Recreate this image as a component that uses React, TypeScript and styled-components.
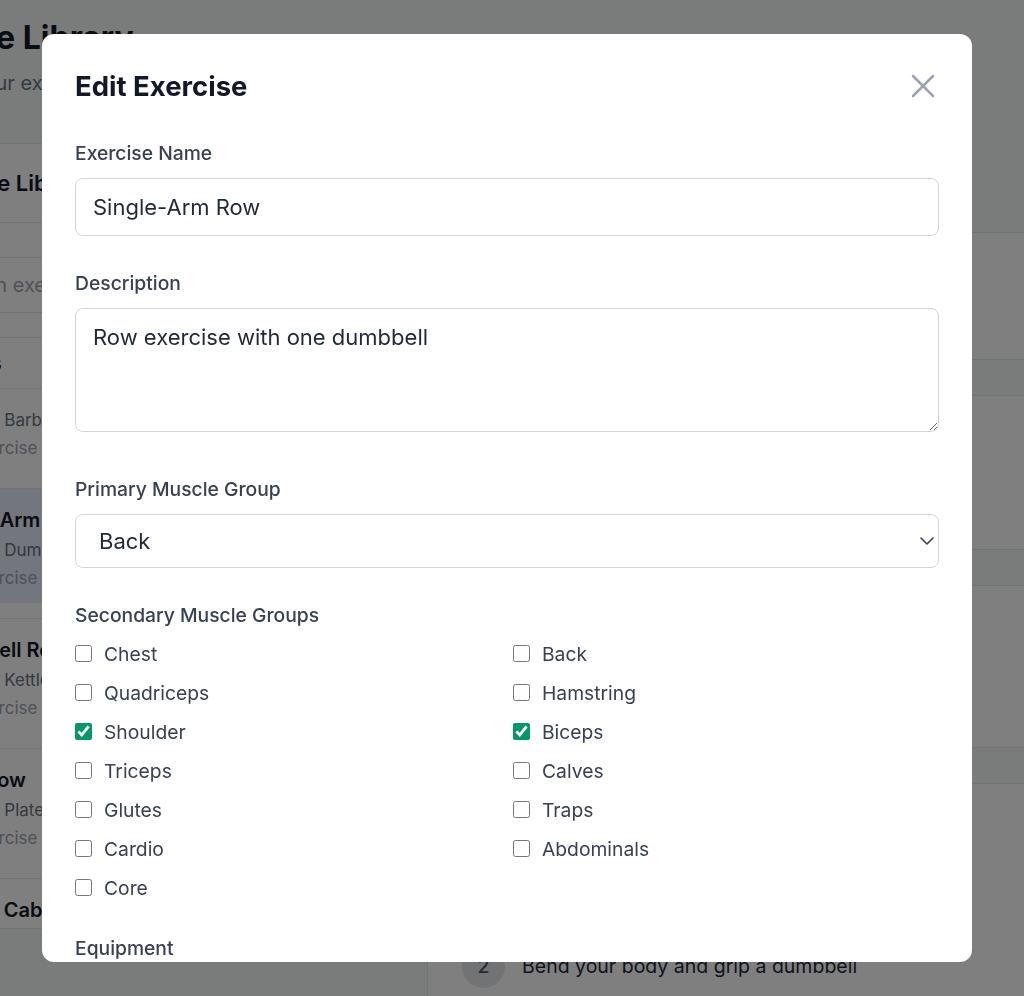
import React from 'react';
import styled, { createGlobalStyle } from 'styled-components';
import { ChevronDown } from 'lucide-react';

const GlobalStyle = createGlobalStyle`
  * { box-sizing: border-box; }
  html, body { margin: 0; padding: 0; }
  body {
    font-family: Inter, "Noto Sans", sans-serif;
    background: #f5f6f7;
    color: #111827;
    overflow: hidden;
  }
`;

/* ---------- background page ---------- */

const Viewport = styled.div`
  width: 100vw;
  height: 100vh;
  overflow: hidden;
  display: flex;
  justify-content: center;
`;

const Page = styled.div`
  flex: 0 0 1260px;
  width: 1260px;
  padding-top: 15px;
`;

const PageTitle = styled.h1`
  margin: 0;
  font-size: 32px;
  line-height: 46px;
  font-weight: 700;
  color: #111827;
`;

const PageSubtitle = styled.p`
  margin: 8px 0 0;
  font-size: 20px;
  line-height: 28px;
  color: #6b7280;
`;

const Columns = styled.div`
  margin-top: 46px;
  display: flex;
  gap: 12px;
  align-items: flex-start;
`;

const LibraryCard = styled.section`
  flex: 0 0 533px;
  background: #fff;
  border: 1px solid #e5e7eb;
  border-radius: 12px;
  overflow: hidden;
  height: 786px;
`;

const CardHeader = styled.div`
  height: 79px;
  display: flex;
  align-items: center;
  padding: 0 37px;
  border-bottom: 1px solid #e5e7eb;
  font-size: 22px;
  font-weight: 600;
  color: #111827;
`;

const SearchWrap = styled.div`
  padding: 34px 24px 24px 14px;
  border-bottom: 1px solid #e5e7eb;
`;

const SearchBox = styled.div`
  height: 56px;
  border: 1px solid #e5e7eb;
  border-radius: 8px;
  display: flex;
  align-items: center;
  padding: 0 14px;
  font-size: 20px;
  color: #9ca3af;
`;

const ListHeader = styled.div`
  height: 51px;
  display: flex;
  align-items: center;
  padding: 0 27px;
  border-bottom: 1px solid #e5e7eb;
  font-size: 20px;
  font-weight: 500;
  color: #111827;
`;

const ListViewport = styled.div`
  overflow: hidden;
`;

const ListInner = styled.div`
  margin-top: -30px;
  display: flex;
  flex-direction: column;
`;

const ListItem = styled.div<{ $active?: boolean }>`
  display: flex;
  gap: 12px;
  padding: 18px 16px;
  height: 130px;
  border-bottom: 1px solid #e5e7eb;
  background: ${(p) => (p.$active ? '#e6ecf8' : '#fff')};
  box-shadow: ${(p) => (p.$active ? 'inset 0 -15px 0 #fff' : 'none')};
`;

const ItemIcon = styled.div`
  flex: 0 0 20px;
  height: 20px;
  margin-top: 3px;
  border-radius: 6px;
  background: #e5e7eb;
`;

const ItemBody = styled.div`
  display: flex;
  flex-direction: column;
`;

const ItemName = styled.div`
  font-size: 20px;
  line-height: 26px;
  font-weight: 600;
  color: #111827;
  margin-bottom: 3px;
`;

const ItemMeta = styled.div`
  font-size: 17px;
  line-height: 28px;
  color: #6b7280;
`;

const Dot = styled.span`
  margin: 0 12px;
`;

const ItemDesc = styled.div`
  font-size: 17px;
  line-height: 28px;
  color: #9ca3af;
`;

const DetailColumn = styled.div`
  flex: 1;
  display: flex;
  flex-direction: column;
  gap: 35px;
`;

const DetailToolbar = styled.div`
  height: 54px;
`;

const DetailCard = styled.div<{ $h: number }>`
  background: #fff;
  border: 1px solid #e5e7eb;
  border-radius: 12px;
  height: ${(p) => p.$h}px;
  padding: 24px 34px;
`;

const SectionTitle = styled.div`
  font-size: 20px;
  line-height: 28px;
  font-weight: 600;
  color: #111827;
  margin-bottom: 42px;
`;

const Steps = styled.div`
  display: flex;
  flex-direction: column;
  gap: 22px;
`;

const StepRow = styled.div`
  display: flex;
  align-items: center;
  gap: 17px;
  height: 44px;
`;

const StepNum = styled.div`
  width: 43px;
  height: 43px;
  border-radius: 50%;
  background: #e5e7eb;
  color: #4b5563;
  display: flex;
  align-items: center;
  justify-content: center;
  font-size: 19.5px;
  font-weight: 500;
`;

const StepText = styled.div`
  font-size: 19.5px;
  color: #1f2937;
`;

/* ---------- modal ---------- */

const Overlay = styled.div`
  position: fixed;
  inset: 0;
  background: rgba(0, 0, 0, 0.5);
  display: flex;
  align-items: center;
  justify-content: center;
  padding-right: 10px;
`;

const Dialog = styled.div`
  width: 930px;
  height: 928px;
  background: #fff;
  border-radius: 12px;
  overflow: hidden;
  padding: 34px 33px;
`;

const DialogHeader = styled.div`
  height: 36px;
  display: flex;
  align-items: center;
  justify-content: space-between;
  margin-bottom: 36px;
`;

const DialogTitle = styled.h2`
  margin: 0;
  font-size: 27.5px;
  line-height: 36px;
  font-weight: 700;
  color: #111827;
`;

const CloseButton = styled.button`
  width: 32px;
  height: 32px;
  padding: 0;
  border: none;
  background: transparent;
  display: flex;
  align-items: center;
  justify-content: center;
  color: #9ca3af;
  cursor: pointer;
`;

const Field = styled.div<{ $space?: number }>`
  margin-bottom: ${(p) => p.$space ?? 34}px;
`;

const Label = styled.label`
  display: block;
  font-size: 19.3px;
  line-height: 26px;
  font-weight: 500;
  color: #374151;
  margin-bottom: 12px;
`;

const TextInput = styled.input`
  display: block;
  width: 100%;
  height: 58px;
  padding: 0 17px;
  border: 1px solid #d1d5db;
  border-radius: 8px;
  font-family: inherit;
  font-size: 22px;
  color: #1f2937;
  outline: none;
`;

const TextArea = styled.textarea`
  display: block;
  width: 100%;
  height: 124px;
  padding: 15px 17px;
  border: 1px solid #d1d5db;
  border-radius: 8px;
  font-family: inherit;
  font-size: 22px;
  line-height: 26px;
  color: #1f2937;
  resize: vertical;
  outline: none;
`;

const SelectWrap = styled.div`
  position: relative;
  color: #374151;
`;

const Select = styled.select`
  display: block;
  width: 100%;
  height: 54px;
  padding: 0 40px 0 23px;
  border: 1px solid #d1d5db;
  border-radius: 8px;
  background: #fff;
  appearance: none;
  -webkit-appearance: none;
  font-family: inherit;
  font-size: 22px;
  color: #1f2937;
  outline: none;
`;

const SelectArrow = styled(ChevronDown)`
  position: absolute;
  right: 0;
  top: 50%;
  transform: translateY(-50%);
  pointer-events: none;
`;

const CheckGrid = styled.div`
  display: grid;
  grid-template-columns: 1fr 1fr;
  column-gap: 12px;
  row-gap: 12px;
`;

const CheckItem = styled.label`
  display: flex;
  align-items: center;
  gap: 12px;
  height: 27px;
  font-size: 19.3px;
  color: #374151;
`;

const Check = styled.input`
  width: 17px;
  height: 17px;
  margin: 0;
  accent-color: #059669;
`;

const muscles: [string, boolean][] = [
  ['Chest', false],
  ['Back', false],
  ['Quadriceps', false],
  ['Hamstring', false],
  ['Shoulder', true],
  ['Biceps', true],
  ['Triceps', false],
  ['Calves', false],
  ['Glutes', false],
  ['Traps', false],
  ['Cardio', false],
  ['Abdominals', false],
  ['Core', false],
];

const exercises = [
  { name: 'Row', muscle: 'Back', equip: 'Barbell', desc: 'Row exercise done with a barbell' },
  { name: 'Single-Arm Row', muscle: 'Back', equip: 'Dumbbell', desc: 'Row exercise with one dumbbell', active: true },
  { name: 'Kettlebell Row', muscle: 'Back', equip: 'Kettlebell', desc: 'Row exercise with a kettlebell' },
  { name: 'Plate Row', muscle: 'Back', equip: 'Plates', desc: 'Row exercise variation with plates' },
  { name: 'Seated Cable Row', muscle: 'Back', equip: 'Cable', desc: 'Row exercise with a cable machine' },
];

export default function App() {
  return (
    <>
      <GlobalStyle />
      <Viewport>
        <Page>
          <PageTitle>Exercise Library</PageTitle>
          <PageSubtitle>Organize your exercises and workouts</PageSubtitle>
          <Columns>
            <LibraryCard>
              <CardHeader>Exercise Library</CardHeader>
              <SearchWrap>
                <SearchBox>Search an exercise...</SearchBox>
              </SearchWrap>
              <ListHeader>Exercises</ListHeader>
              <ListViewport>
                <ListInner>
                  {exercises.map((e) => (
                    <ListItem key={e.name} $active={e.active}>
                      <ItemIcon />
                      <ItemBody>
                        <ItemName>{e.name}</ItemName>
                        <ItemMeta>
                          {e.muscle}
                          <Dot>•</Dot>
                          {e.equip}
                        </ItemMeta>
                        <ItemDesc>{e.desc}</ItemDesc>
                      </ItemBody>
                    </ListItem>
                  ))}
                </ListInner>
              </ListViewport>
            </LibraryCard>
            <DetailColumn>
              <DetailToolbar />
              <DetailCard $h={128} />
              <DetailCard $h={155} />
              <DetailCard $h={163} />
              <DetailCard $h={400}>
                <SectionTitle>Instructions</SectionTitle>
                <Steps>
                  <StepRow>
                    <StepNum>1</StepNum>
                    <StepText>Place one knee and hand on a bench</StepText>
                  </StepRow>
                  <StepRow>
                    <StepNum>2</StepNum>
                    <StepText>Bend your body and grip a dumbbell</StepText>
                  </StepRow>
                </Steps>
              </DetailCard>
            </DetailColumn>
          </Columns>
        </Page>
      </Viewport>

      <Overlay>
        <Dialog>
          <DialogHeader>
            <DialogTitle>Edit Exercise</DialogTitle>
            <CloseButton aria-label="Close">
              <svg width="24" height="24" viewBox="0 0 24 24" fill="none">
                <path d="M2 2L22 22M22 2L2 22" stroke="currentColor" strokeWidth="2.5" strokeLinecap="round" />
              </svg>
            </CloseButton>
          </DialogHeader>

          <Field>
            <Label>Exercise Name</Label>
            <TextInput defaultValue="Single-Arm Row" />
          </Field>

          <Field $space={44}>
            <Label>Description</Label>
            <TextArea defaultValue="Row exercise with one dumbbell" />
          </Field>

          <Field>
            <Label>Primary Muscle Group</Label>
            <SelectWrap>
              <Select defaultValue="Back">
                <option>Chest</option>
                <option>Back</option>
                <option>Shoulder</option>
                <option>Biceps</option>
              </Select>
              <SelectArrow size={24} strokeWidth={1.6} />
            </SelectWrap>
          </Field>

          <Field>
            <Label>Secondary Muscle Groups</Label>
            <CheckGrid>
              {muscles.map(([m, c]) => (
                <CheckItem key={m}>
                  <Check type="checkbox" defaultChecked={c} />
                  {m}
                </CheckItem>
              ))}
            </CheckGrid>
          </Field>

          <Field>
            <Label>Equipment</Label>
            <SelectWrap>
              <Select defaultValue="Dumbbell">
                <option>Barbell</option>
                <option>Dumbbell</option>
                <option>Kettlebell</option>
              </Select>
              <SelectArrow size={24} strokeWidth={1.6} />
            </SelectWrap>
          </Field>
        </Dialog>
      </Overlay>
    </>
  );
}
